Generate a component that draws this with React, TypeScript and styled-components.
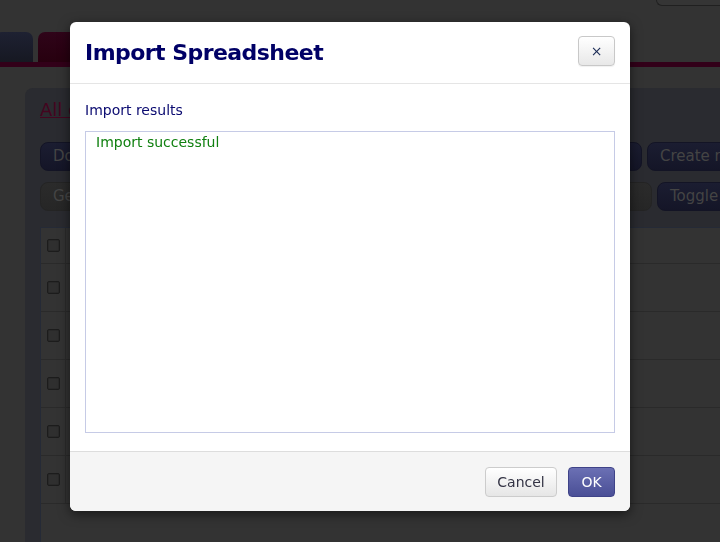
import styled, { createGlobalStyle } from 'styled-components';

const GlobalStyle = createGlobalStyle`
  html, body {
    margin: 0;
    padding: 0;
    background: #333333;
    font-family: "DejaVu Sans", Verdana, sans-serif;
    overflow: hidden;
  }
  * { box-sizing: border-box; }
`;

const rows = [0, 1, 2, 3, 4];

export default function App() {
  return (
    <>
      <GlobalStyle />
      <Page>
        <TopStrip>
          <AccountBox />
        </TopStrip>
        <Tabs>
          <Tab tone="navy" size={38} />
          <Tab tone="maroon" size={140} />
        </Tabs>
        <TabBar />
        <Panel>
          <PanelLink>All contacts</PanelLink>
          <ButtonRow>
            <PageButton tone="navy" size={180}>Download</PageButton>
            <PageButton tone="navy" size={417}>Import</PageButton>
            <PageButton tone="navy" size={140}>Create new</PageButton>
          </ButtonRow>
          <ButtonRow>
            <PageButton tone="gray" size={180}>Generate</PageButton>
            <PageButton tone="gray" size={427}>Columns</PageButton>
            <PageButton tone="navy" size={120}>Toggle view</PageButton>
          </ButtonRow>
          <Table>
            <HeaderRow>
              <CheckCell><Check /></CheckCell>
              <Cell />
            </HeaderRow>
            {rows.map((r) => (
              <BodyRow key={r}>
                <CheckCell><Check /></CheckCell>
                <Cell />
              </BodyRow>
            ))}
          </Table>
        </Panel>
      </Page>

      <Overlay>
        <Modal>
          <ModalHeader>
            <ModalTitle>Import Spreadsheet</ModalTitle>
            <CloseButton aria-label="Close">×</CloseButton>
          </ModalHeader>
          <ModalBody>
            <Label>Import results</Label>
            <ResultBox>Import successful</ResultBox>
          </ModalBody>
          <ModalFooter>
            <FooterButton>Cancel</FooterButton>
            <FooterButton primary>OK</FooterButton>
          </ModalFooter>
        </Modal>
      </Overlay>
    </>
  );
}

const Page = styled.div`
  width: 720px;
  height: 542px;
  overflow: hidden;
  display: flex;
  flex-direction: column;
  background: #333333;
`;

const TopStrip = styled.div`
  height: 32px;
  display: flex;
  justify-content: flex-end;
`;

const AccountBox = styled.div`
  width: 64px;
  height: 6px;
  border: 1px solid #202020;
  border-top: none;
  border-right: none;
  border-radius: 0 0 0 8px;
  background: #353535;
`;

const Tabs = styled.div`
  height: 30px;
  display: flex;
  gap: 5px;
  margin-left: -5px;
`;

const Tab = styled.div<{ tone: 'navy' | 'maroon'; size: number }>`
  width: ${(p) => p.size}px;
  height: 30px;
  border-radius: 7px 7px 0 0;
  background: ${(p) =>
    p.tone === 'navy'
      ? 'linear-gradient(#1e2132, #161822)'
      : 'linear-gradient(#2f0419, #27000f)'};
`;

const TabBar = styled.div`
  height: 5px;
  background: #320019;
`;

const Panel = styled.div`
  margin: 21px 0 0 25px;
  flex: 1;
  background: #2a2b30;
  border-radius: 8px 0 0 0;
  padding: 11px 0 0 15px;
  display: flex;
  flex-direction: column;
`;

const PanelLink = styled.a`
  font-size: 18px;
  line-height: 22px;
  color: #44051f;
  text-decoration: underline;
  white-space: nowrap;
`;

const ButtonRow = styled.div`
  display: flex;
  gap: 5px;
  margin-top: 21px;
  white-space: nowrap;

  & + & {
    margin-top: 11px;
  }
`;

const PageButton = styled.div<{ tone: 'navy' | 'gray'; size: number }>`
  flex: none;
  width: ${(p) => p.size}px;
  height: 29px;
  border-radius: 8px;
  padding: 0 12px;
  font-size: 15px;
  line-height: 27px;
  color: #444444;
  overflow: hidden;
  background: ${(p) =>
    p.tone === 'navy'
      ? 'linear-gradient(#1b1d31, #141527)'
      : 'linear-gradient(#2b2b2b, #262626)'};
  border: 1px solid ${(p) => (p.tone === 'navy' ? '#131425' : '#242424')};
`;

const Table = styled.div`
  margin-top: 16px;
  flex: 1;
  border-left: 1px solid #252a36;
  border-top: 1px solid #252a36;
  background: #333333;
  display: flex;
  flex-direction: column;
`;

const HeaderRow = styled.div`
  height: 36px;
  flex: none;
  display: flex;
  border-bottom: 1px solid #2a2a2a;
`;

const BodyRow = styled(HeaderRow)`
  height: 48px;
`;

const CheckCell = styled.div`
  width: 25px;
  border-right: 1px solid #2b2b2b;
  display: flex;
  align-items: center;
  justify-content: center;
`;

const Cell = styled.div`
  flex: 1;
`;

const Check = styled.span`
  width: 13px;
  height: 13px;
  border: 1px solid #1c1c1c;
  border-radius: 2px;
  background: #2f2f2f;
  box-shadow: inset 0 0 0 1px #292929;
`;

const Overlay = styled.div`
  position: fixed;
  inset: 0;
  padding: 22px 0 0 70px;
`;

const Modal = styled.div`
  width: 560px;
  background: #ffffff;
  border-radius: 6px;
  box-shadow: 0 3px 12px rgba(0, 0, 0, 0.55);
  display: flex;
  flex-direction: column;
`;

const ModalHeader = styled.div`
  height: 62px;
  padding: 0 15px;
  border-bottom: 1px solid #e5e5e5;
  display: flex;
  align-items: center;
  justify-content: space-between;
`;

const ModalTitle = styled.h4`
  margin: 0;
  font-size: 22px;
  font-weight: bold;
  line-height: 28px;
  letter-spacing: -0.55px;
  color: #000066;
`;

const CloseButton = styled.button`
  align-self: flex-start;
  margin-top: 14px;
  width: 37px;
  height: 30px;
  padding: 0;
  border: 1px solid #c8c8c8;
  border-radius: 4px;
  background: linear-gradient(#ffffff, #e8e8e8);
  box-shadow: 0 1px 1px rgba(0, 0, 0, 0.06);
  font-family: "DejaVu Sans", Verdana, sans-serif;
  font-size: 14px;
  line-height: 26px;
  color: #1a2a55;
`;

const ModalBody = styled.div`
  padding: 16px 15px 18px;
`;

const Label = styled.div`
  font-size: 14px;
  line-height: 20px;
  color: #0a0a70;
  margin-bottom: 11px;
`;

const ResultBox = styled.div`
  height: 302px;
  border: 1px solid #c6cbe6;
  padding: 1px 10px;
  font-size: 14px;
  line-height: 18px;
  color: #108010;
`;

const ModalFooter = styled.div`
  height: 60px;
  padding: 0 15px;
  background: #f5f5f5;
  border-top: 1px solid #dddddd;
  border-radius: 0 0 6px 6px;
  display: flex;
  align-items: center;
  justify-content: flex-end;
  gap: 11px;
`;

const FooterButton = styled.button<{ primary?: boolean }>`
  height: 30px;
  min-width: ${(p) => (p.primary ? 47 : 72)}px;
  padding: 0 10px;
  border-radius: 4px;
  font-family: "DejaVu Sans", Verdana, sans-serif;
  font-size: 14px;
  line-height: 28px;
  border: 1px solid ${(p) => (p.primary ? '#3f4388' : '#cccccc')};
  color: ${(p) => (p.primary ? '#ffffff' : '#333344')};
  background: ${(p) =>
    p.primary
      ? 'linear-gradient(#6b70b4, #4a4f96)'
      : 'linear-gradient(#ffffff, #e6e6e6)'};
`;
